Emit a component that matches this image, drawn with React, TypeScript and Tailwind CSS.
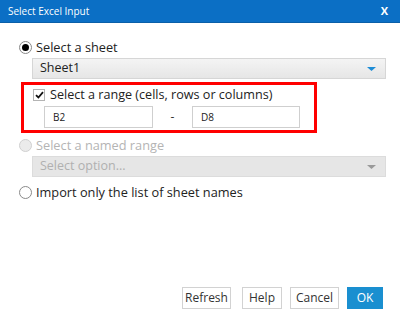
import React from "react";

const font = { fontFamily: '"Open Sans", "Noto Sans", sans-serif' };

const Radio: React.FC<{ checked?: boolean; disabled?: boolean; label: string }> = ({ checked, disabled, label }) => (
  <div className="flex h-[14px] items-center">
    <span
      className={
        "flex h-[13px] w-[13px] items-center justify-center rounded-full border " +
        (disabled ? "border-[#d0d0d0] bg-[#ebebeb]" : "border-[#8a8a8a] bg-white")
      }
    >
      {checked && <span className="h-[7px] w-[7px] rounded-full bg-black" />}
    </span>
    <span className={"ml-[4px] text-[12.75px] leading-none " + (disabled ? "text-[#b4b4b4]" : "text-[#222]")}>{label}</span>
  </div>
);

const Caret: React.FC<{ color: string }> = ({ color }) => (
  <svg width="9" height="4" viewBox="0 0 9 4" className="mr-[9px]">
    <path d="M0 0h9L4.5 4z" fill={color} />
  </svg>
);

const Button: React.FC<{ label: string; primary?: boolean; w: string }> = ({ label, primary, w }) => (
  <button
    className={
      "flex h-[22px] items-center justify-center border text-[12px] " +
      w +
      (primary ? " border-[#1a8fd0] bg-[#1a8fd0] text-white" : " border-[#d2d2d2] bg-white text-[#333]")
    }
  >
    {label}
  </button>
);

export default function App() {
  return (
    <div className="flex h-[313px] w-[400px] flex-col bg-white" style={font}>
      <div className="flex h-[23px] items-center justify-between border-b border-[#0a5fa8] bg-[#0b6fc5] pl-[8px] pr-[12px]">
        <span className="text-[10px] text-white">Select Excel Input</span>
        <span className="text-[11px] font-bold text-white">X</span>
      </div>

      <div className="flex flex-1 flex-col pl-[19px] pt-[17px]">
        <Radio checked label="Select a sheet" />

        <div className="ml-[13px] mt-[4px] flex h-[21px] w-[354px] items-center justify-between border border-[#d6d6d6] bg-gradient-to-b from-[#f4f4f4] to-[#e6e6e6]">
          <span className="pl-[7px] text-[12.5px] text-[#222]">Sheet1</span>
          <Caret color="#1f8dd6" />
        </div>

        <div className="ml-[2px] mt-[3px] flex h-[51px] w-[296px] flex-col border-[3px] border-[#ff0000] pl-[9px] pt-[3px]">
          <div className="flex h-[14px] items-center">
            <span className="flex h-[12px] w-[12px] items-center justify-center border border-[#b4b4b4] bg-white">
              <svg width="9" height="8" viewBox="0 0 9 8">
                <path d="M1 4.2 3.4 6.5 8 1.2" stroke="#111" strokeWidth="1.8" fill="none" />
              </svg>
            </span>
            <span className="ml-[5px] text-[12.6px] leading-none text-[#222]">Select a range (cells, rows or columns)</span>
          </div>
          <div className="mt-[4px] flex items-center">
            <div className="ml-[11px] flex h-[22px] w-[109px] items-center border border-[#cfcfcf] bg-white pl-[8px] text-[10px] text-[#222]">B2</div>
            <span className="w-[39px] text-center text-[12px] text-[#333]">-</span>
            <div className="flex h-[22px] w-[108px] items-center border border-[#cfcfcf] bg-white pl-[8px] text-[10px] text-[#222]">D8</div>
          </div>
        </div>

        <div className="mt-[5px]">
          <Radio disabled label="Select a named range" />
        </div>

        <div className="ml-[13px] mt-[4px] flex h-[21px] w-[354px] items-center justify-between border border-[#dcdcdc] bg-[#e6e6e6]">
          <span className="pl-[7px] text-[12.5px] text-[#b0b0b0]">Select option...</span>
          <Caret color="#9a9a9a" />
        </div>

        <div className="mt-[8px]">
          <Radio label="Import only the list of sheet names" />
        </div>

        <div className="mt-auto mb-[4px] mr-[17px] flex justify-end">
          <Button label="Refresh" w="w-[49px]" />
          <span className="w-[11px]" />
          <Button label="Help" w="w-[40px]" />
          <span className="w-[8px]" />
          <Button label="Cancel" w="w-[49px]" />
          <span className="w-[8px]" />
          <Button label="OK" w="w-[36px]" primary />
        </div>
      </div>
    </div>
  );
}
